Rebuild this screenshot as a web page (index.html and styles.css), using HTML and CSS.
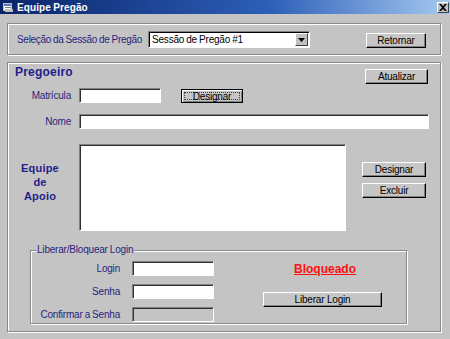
FILE: index.html
```html
<!DOCTYPE html>
<html lang="pt">
<head>
    <meta charset="UTF-8">
    <meta name="viewport" content="width=device-width, initial-scale=1.0">
    <title>Equipe Pregão</title>
    <link rel="stylesheet" href="styles.css">
</head>
<body>
    <div class="window">
        <div class="titlebar">
            <svg class="app-icon" width="10" height="9" viewBox="0 0 10 9">
                <rect x="0.5" y="0.5" width="8" height="7" fill="#fff" stroke="#c0c0c0"/>
                <rect x="1" y="1" width="7" height="2" fill="#5a7ac8"/>
                <rect x="2" y="4" width="6" height="1" fill="#808080"/>
                <rect x="2" y="6" width="8" height="3" fill="#c0c0c0"/>
            </svg>
            <span class="title">Equipe Pregão</span>
            <span class="close-btn">
                <svg width="8" height="7" viewBox="0 0 8 7"><path d="M0 0h2l2 2 2-2h2L5 3.5 8 7H6L4 5 2 7H0l3-3.5z" fill="#000"/></svg>
            </span>
        </div>

        <div class="client">
            <!-- session selection -->
            <div class="frame session">
                <span class="lbl session-lbl">Seleção da Sessão de Pregão</span>
                <div class="combo">
                    <span class="combo-text">Sessão de Pregão #1</span>
                    <span class="combo-drop"><svg width="7" height="4" viewBox="0 0 7 4"><path d="M0 0h7L3.5 4z" fill="#000"/></svg></span>
                </div>
                <button class="btn btn-retornar">Retornar</button>
            </div>

            <!-- main frame -->
            <div class="frame main">
                <div class="head-row">
                    <span class="heading">Pregoeiro</span>
                    <button class="btn btn-atualizar">Atualizar</button>
                </div>

                <div class="row row-matricula">
                    <span class="lbl field-lbl">Matrícula</span>
                    <div class="input input-matricula"></div>
                    <button class="btn btn-focus btn-designar-top"><span>Designar</span></button>
                </div>

                <div class="row row-nome">
                    <span class="lbl field-lbl">Nome</span>
                    <div class="input input-nome"></div>
                </div>

                <div class="apoio-row">
                    <div class="apoio-lbl">Equipe<br>de<br>Apoio</div>
                    <div class="input listbox"></div>
                    <div class="apoio-btns">
                        <button class="btn btn-side">Designar</button>
                        <button class="btn btn-side">Excluir</button>
                    </div>
                </div>

                <div class="group">
                    <span class="legend">Liberar/Bloquear Login</span>
                    <div class="login-grid">
                        <span class="lbl">Login</span>
                        <div class="input input-login"></div>
                        <span class="lbl">Senha</span>
                        <div class="input input-login"></div>
                        <span class="lbl">Confirmar a Senha</span>
                        <div class="input input-login disabled"></div>
                    </div>
                    <div class="status-col">
                        <span class="status">Bloqueado</span>
                        <button class="btn btn-liberar">Liberar Login</button>
                    </div>
                </div>
            </div>
        </div>
    </div>
</body>
</html>
```

FILE: styles.css
```css
body {
    margin: 0;
    font-family: "Liberation Sans", Arial, sans-serif;
    font-size: 10px;
    letter-spacing: -0.2px;
    word-spacing: -0.5px;
    background-color: #c4c4c4;
}
.window {
    width: 450px;
    height: 339px;
    background: #c4c4c4;
    overflow: hidden;
}
.titlebar {
    height: 14px;
    display: flex;
    align-items: center;
    background: linear-gradient(to right, #0a246a 0%, #2d5fb8 60%, #a6caf0 100%);
    color: white;
}
.app-icon {
    margin-left: 3px;
    margin-right: 4px;
}
.title {
    font-weight: bold;
    font-size: 10px;
    letter-spacing: 0.1px;
}
.close-btn {
    margin-left: auto;
    margin-right: 1px;
    width: 10px;
    height: 9px;
    display: flex;
    align-items: center;
    justify-content: center;
    background: #c0c0c0;
    border: 1px solid;
    border-color: #fff #404040 #404040 #fff;
}
.client {
    padding-left: 7px;
    padding-top: 9px;
}
.frame {
    width: 434px;
    border: 1px solid #8a8a8a;
    box-shadow: inset 1px 1px 0 #fff, 1px 1px 0 #fff;
    box-sizing: border-box;
}
.lbl {
    color: #26267e;
    white-space: nowrap;
}

/* session frame */
.session {
    height: 32px;
    display: flex;
    align-items: center;
    padding-left: 9px;
}
.session-lbl {
    width: 131px;
    letter-spacing: -0.3px;
}
.combo {
    width: 162px;
    height: 17px;
    box-sizing: border-box;
    background: white;
    border: 1px solid;
    border-color: #808080 #fff #fff #808080;
    box-shadow: inset 1px 1px 0 #000;
    display: flex;
    align-items: center;
}
.combo-text {
    padding-left: 3px;
    color: #000;
}
.combo-drop {
    margin-left: auto;
    margin-right: 1px;
    width: 13px;
    height: 13px;
    margin-top: 1px;
    box-sizing: border-box;
    background: #c0c0c0;
    border: 1px solid;
    border-color: #fff #404040 #404040 #fff;
    display: flex;
    align-items: center;
    justify-content: center;
}
.btn {
    font-family: "Liberation Sans", Arial, sans-serif;
    font-size: 10px;
    letter-spacing: -0.2px;
    color: #000;
    background: #c6c6c6;
    border: 1px solid;
    border-color: #fff #000 #000 #fff;
    box-shadow: inset -1px -1px 0 #808080;
    padding: 0;
    height: 15px;
    line-height: 12px;
    box-sizing: border-box;
}
.btn-retornar {
    margin-left: auto;
    margin-right: 14px;
    width: 60px;
    margin-top: 3px;
}

/* main frame */
.main {
    margin-top: 7px;
    height: 270px;
}
.head-row {
    display: flex;
    align-items: flex-start;
    height: 22px;
    padding-left: 7px;
}
.heading {
    color: #1e1e8c;
    font-weight: bold;
    font-size: 12px;
    letter-spacing: 0.2px;
    line-height: 15px;
    margin-top: 2px;
}
.btn-atualizar {
    margin-left: auto;
    margin-right: 12px;
    margin-top: 6px;
    width: 63px;
}
.row {
    display: flex;
    align-items: center;
}
.field-lbl {
    width: 63px;
    text-align: right;
    margin-right: 8px;
}
.input {
    height: 15px;
    box-sizing: border-box;
    background: white;
    border: 1px solid;
    border-color: #808080 #fff #fff #808080;
    box-shadow: inset 1px 1px 0 #303030;
}
.row-matricula {
    margin-top: 3px;
}
.input-matricula {
    width: 82px;
}
.btn-focus {
    margin-left: 20px;
    width: 62px;
    height: 14px;
    border-color: #000;
    box-shadow: inset 1px 1px 0 #fff, inset -1px -1px 0 #808080;
    padding: 2px;
    display: flex;
}
.btn-focus span {
    flex: 1;
    border: 1px dotted #404040;
    line-height: 7px;
}
.row-nome {
    margin-top: 11px;
}
.input-nome {
    width: 350px;
}
.apoio-row {
    display: flex;
    margin-top: 15px;
}
.apoio-lbl {
    width: 64px;
    margin-right: 7px;
    text-align: center;
    color: #1e1e8c;
    font-weight: bold;
    font-size: 11px;
    letter-spacing: 0.2px;
    line-height: 14px;
    align-self: center;
    margin-bottom: 12px;
}
.listbox {
    width: 267px;
    height: 87px;
}
.apoio-btns {
    display: flex;
    flex-direction: column;
    gap: 6px;
    margin-left: 16px;
    margin-top: 18px;
}
.btn-side {
    width: 64px;
}

/* login group */
.group {
    position: relative;
    margin-top: 19px;
    margin-left: 22px;
    width: 377px;
    height: 74px;
    box-sizing: border-box;
    border: 1px solid #8a8a8a;
    box-shadow: inset 1px 1px 0 #fff, 1px 1px 0 #fff;
    display: flex;
    padding-top: 8px;
}
.legend {
    position: absolute;
    top: -7px;
    left: 5px;
    background: #c4c4c4;
    padding: 0 1px;
    color: #26267e;
}
.login-grid {
    display: grid;
    grid-template-columns: 89px 82px;
    column-gap: 12px;
    row-gap: 5px;
    align-items: center;
}
.login-grid .lbl {
    text-align: right;
}
.input-login {
    width: 82px;
}
.input-login.disabled {
    background: #c4c4c4;
}
.status-col {
    margin-left: 49px;
    width: 119px;
    display: flex;
    flex-direction: column;
    align-items: center;
}
.status {
    color: #ff1010;
    font-weight: bold;
    font-size: 12px;
    letter-spacing: 0;
    text-decoration: underline;
    margin-top: 3px;
    margin-left: 5px;
}
.btn-liberar {
    width: 119px;
    margin-top: 16px;
}
```
